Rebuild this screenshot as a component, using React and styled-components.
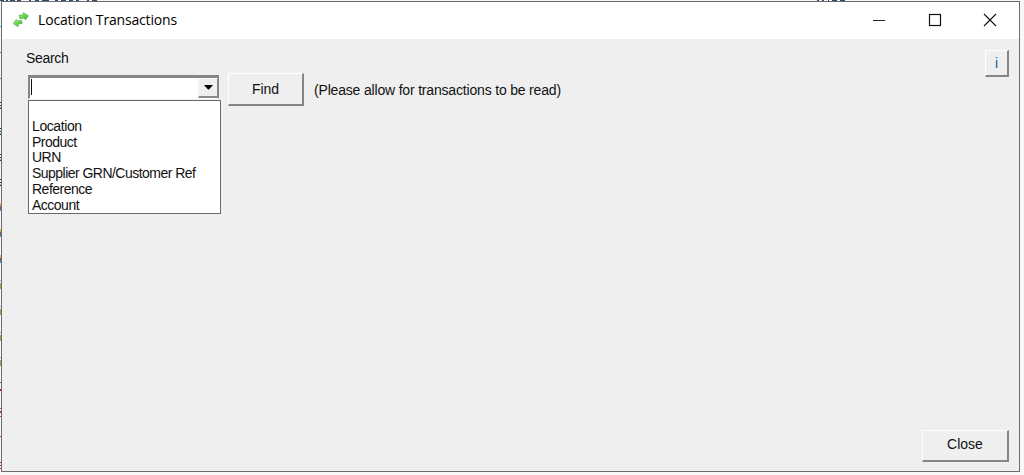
import React from "react";
import styled, { createGlobalStyle } from "styled-components";

const GlobalStyle = createGlobalStyle`
  * { box-sizing: border-box; }
  body { margin: 0; background: #f7f7f7; overflow: hidden; }
`;

const Desktop = styled.div`
  position: relative;
  width: 1024px;
  height: 475px;
  padding: 1px 4px 3px 1px;
  overflow: hidden;
  background: #f8f8f8;
  font-family: "Liberation Sans", Arial, sans-serif;
  color: #111;
`;

const Mark = styled.i`
  position: absolute;
  left: 0;
  top: ${(p) => p.$y}px;
  width: 2px;
  height: ${(p) => p.$h || 1}px;
  background: ${(p) => p.$color};
`;

const TopMark = styled.i`
  position: absolute;
  top: 0;
  left: ${(p) => p.$x}px;
  width: ${(p) => p.$w}px;
  height: 1px;
  background: ${(p) => p.$color};
`;

const Window = styled.main`
  position: relative;
  display: flex;
  flex-direction: column;
  width: 1019px;
  height: 471px;
  border: 1px solid #6c6c6c;
  background: #efefef;
`;

const TitleBar = styled.header`
  display: flex;
  align-items: center;
  flex: 0 0 37px;
  padding: 0 1px 1px 10px;
  background: #fff;
`;

const Title = styled.h1`
  flex: 1;
  margin: 0 0 0 8px;
  font: 400 14px/20px "Open Sans", "Noto Sans", sans-serif;
  letter-spacing: -0.17px;
  color: #000;
`;

const WindowControl = styled.span`
  display: flex;
  justify-content: center;
  width: ${(p) => p.$width}px;
`;

const Content = styled.section`
  display: flex;
  flex: 1;
  flex-direction: column;
  justify-content: space-between;
  padding: 10px 10px 9px 24px;
`;

const TopArea = styled.div`
  display: flex;
  justify-content: space-between;
  align-items: flex-start;
`;

const SearchArea = styled.div``;

const Label = styled.div`
  font-size: 14px;
  line-height: 18px;
  letter-spacing: -0.3px;
`;

const SearchRow = styled.div`
  display: flex;
  align-items: flex-start;
  padding: 6px 0 0 2px;
`;

const Picker = styled.div`
  width: 193px;
  margin-right: 7px;
`;

const Combo = styled.div`
  display: flex;
  align-items: stretch;
  width: 191px;
  height: 24px;
  margin: 2px 0 1px;
  padding: 0 0 0 1px;
  border: 2px solid #868686;
  border-top-width: 3px;
  border-right-width: 1px;
  border-bottom: 1px solid #fff;
  background: #fff;
`;

const Caret = styled.span`
  width: 1px;
  height: 16px;
  margin-top: 1px;
  background: #111;
`;

const Arrow = styled.span`
  display: flex;
  align-items: center;
  justify-content: center;
  width: 20px;
  height: 20px;
  margin-left: auto;
  border: 1px solid #fafafa;
  border-right-color: #8a8a8a;
  border-bottom: 2px solid #8a8a8a;
  background: #efefef;
`;

const Options = styled.ul`
  height: 114px;
  margin: 0;
  padding: 1px 3px;
  border: 1px solid #696969;
  background: #fff;
  list-style: none;
`;

const Option = styled.li`
  height: 15.8px;
  font-size: 14px;
  line-height: 17px;
  letter-spacing: ${(p) => p.$spacing || 0}px;
  white-space: nowrap;
`;

const Button = styled.button`
  width: ${(p) => p.$width}px;
  height: ${(p) => p.$height}px;
  margin: ${(p) => p.$offset || "0"};
  padding: 0 0 ${(p) => p.$lift || 0}px;
  border: 1px solid #fff;
  border-right: 2px solid #858585;
  border-bottom: 2px solid #858585;
  background: #efefef;
  color: ${(p) => p.$color || "#111"};
  font: 14px "Liberation Sans", Arial, sans-serif;
`;

const Hint = styled.span`
  margin: 8px 0 0 10px;
  font-size: 14px;
  line-height: 18px;
  letter-spacing: -0.18px;
  white-space: nowrap;
`;

const Footer = styled.footer`
  display: flex;
  justify-content: flex-end;
`;

const edgeMarks = [
  [26, "#47a9c9"], [52, "#a76443"], [78, "#b56745"],
  ...[102, 128, 154, 179].flatMap((y) => [[y, "#173e52"], [y + 3, "#173e52"], [y + 5, "#6bc1ef"], [y + 6, "#173e52"]]),
  ...[203, 229, 255].flatMap((y) => [[y, "#eab164", 3], [y + 3, "#8a526f", 3], [y + 6, "#498fdf", 2]]),
  ...[280, 306, 332, 357].flatMap((y) => [[y, "#8bbfc4"], [y + 3, "#a2a452", 6]]),
  [382, "#e52239"], [389, "#e80014", 2], [408, "#e33b62"], [411, "#dc1654", 2],
  [416, "#f13b47"], [436, "#ed1b20"], [462, "#e40c2c"], [465, "#ee244e"], [468, "#ed2338"],
];

const topMarks = [
  [0, 4], [6, 2], [10, 5], [17, 4], [29, 2], [35, 4], [42, 7],
  [55, 3], [61, 5], [69, 4], [76, 3], [87, 2], [92, 5],
  [817, 2], [822, 2], [828, 1], [832, 5], [840, 5],
];

export default function App() {
  return (
    <Desktop>
      <GlobalStyle />
      {edgeMarks.map(([y, color, h]) => <Mark key={y} $y={y} $h={h} $color={color} />)}
      {topMarks.map(([x, w]) => <TopMark key={x} $x={x} $w={w} $color="#314b6c" />)}
      <Window>
        <TitleBar>
          <svg width="18" height="18" viewBox="0 0 18 18">
            <defs>
              <linearGradient id="leaf" x2="1" y2="1">
                <stop stopColor="#a6ee86" />
                <stop offset=".6" stopColor="#58d642" />
                <stop offset="1" stopColor="#259e20" />
              </linearGradient>
            </defs>
            <g fill="url(#leaf)" stroke="#48a83f" strokeWidth=".6">
              <path d="M7 4.3 L11.5 3.8 L11.2 1.7 L16.5 4.7 L13.2 9 L12.5 7 L8 7.7Z" />
              <path d="M10.2 12.3 L6 13.2 L6.3 15.7 L1.3 12.7 L4.4 8.2 L5 10.2 L9.3 9.2Z" />
            </g>
          </svg>
          <Title>Location Transactions</Title>
          <WindowControl $width={56}><svg width="14" height="14"><path d="M1 7.5H13" stroke="#222" /></svg></WindowControl>
          <WindowControl $width={55}><svg width="14" height="14"><rect x="1.5" y="1.5" width="11" height="11" fill="none" stroke="#111" strokeWidth="1.2" /></svg></WindowControl>
          <WindowControl $width={56}><svg width="14" height="14"><path d="M1 1L13 13M13 1L1 13" stroke="#111" strokeWidth="1.1" /></svg></WindowControl>
        </TitleBar>
        <Content>
          <TopArea>
            <SearchArea>
              <Label>Search</Label>
              <SearchRow>
                <Picker>
                  <Combo>
                    <Caret />
                    <Arrow><svg width="9" height="5"><path d="M0 0H9L5 4.5H4Z" fill="#000" /></svg></Arrow>
                  </Combo>
                  <Options>
                    <Option />
                    <Option $spacing={-0.4}>Location</Option>
                    <Option $spacing={-0.5}>Product</Option>
                    <Option $spacing={-0.5}>URN</Option>
                    <Option $spacing={-0.53}>Supplier GRN/Customer Ref</Option>
                    <Option $spacing={-0.5}>Reference</Option>
                    <Option $spacing={-0.5}>Account</Option>
                  </Options>
                </Picker>
                <Button $width={76} $height={33} $lift={1}>Find</Button>
                <Hint>(Please allow for transactions to be read)</Hint>
              </SearchRow>
            </SearchArea>
            <Button $width={24} $height={27} $color="#195a94" $offset="1px 0 0">i</Button>
          </TopArea>
          <Footer><Button $width={87} $height={32} $lift={3}>Close</Button></Footer>
        </Content>
      </Window>
    </Desktop>
  );
}
